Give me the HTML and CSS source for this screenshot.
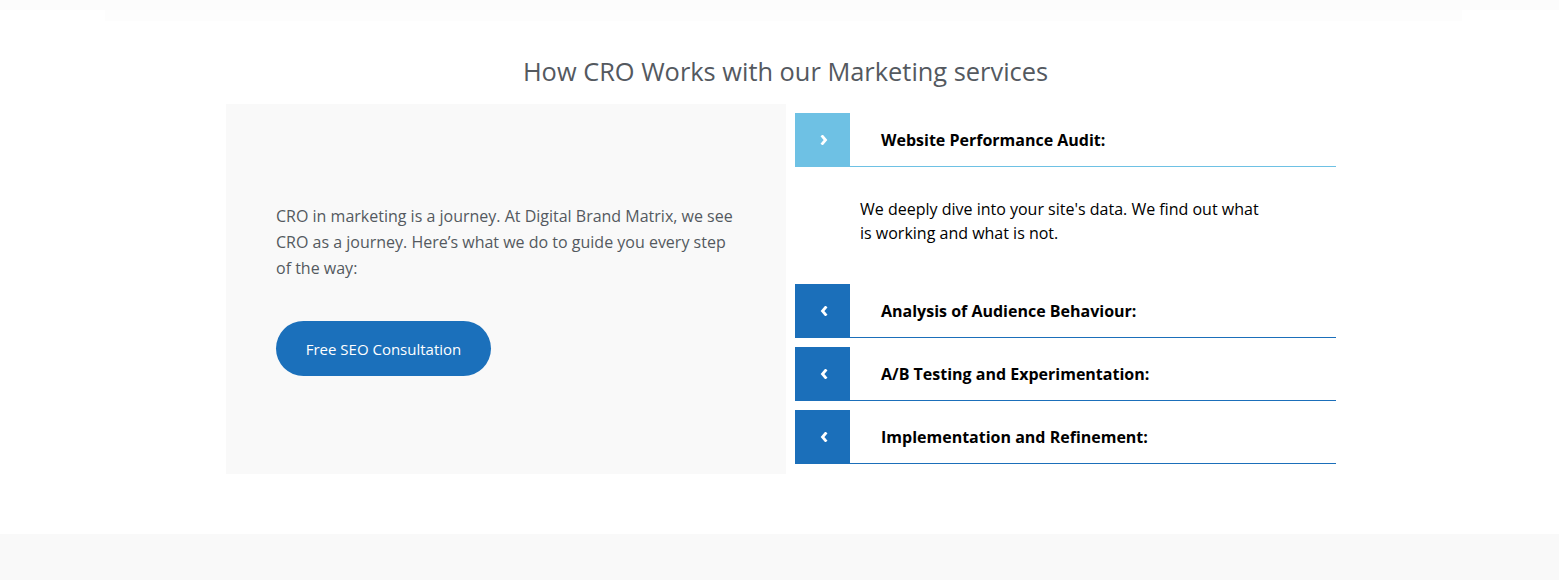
FILE: index.html
```html
<!DOCTYPE html>
<html lang="en">
<head>
<meta charset="utf-8">
<title>How CRO Works</title>
<link rel="stylesheet" href="styles.css">
</head>
<body>
<div class="topbar"></div>
<div class="topbar-inner"></div>
<section class="cro">
  <div class="container">
    <h2 class="heading">How CRO Works with our Marketing services</h2>
    <div class="cols">
      <div class="panel">
        <p class="intro">CRO in marketing is a journey. At Digital Brand Matrix, we see CRO as a journey. Here’s what we do to guide you every step of the way:</p>
        <a class="btn" href="#">Free SEO Consultation</a>
      </div>
      <div class="accordion">
        <div class="item active">
          <div class="item-head">
            <span class="icon"><svg width="8" height="10" viewBox="0 0 8 10"><polyline points="2.5,1.5 5.5,5 2.5,8.5" fill="none" stroke="#fff" stroke-width="2.8" stroke-linecap="square"/></svg></span>
            <span class="title">Website Performance Audit:</span>
          </div>
          <div class="item-body">We deeply dive into your site's data. We find out what is working and what is not.</div>
        </div>
        <div class="item">
          <div class="item-head">
            <span class="icon"><svg width="8" height="10" viewBox="0 0 8 10"><polyline points="5.5,1.5 2.5,5 5.5,8.5" fill="none" stroke="#fff" stroke-width="2.8" stroke-linecap="square"/></svg></span>
            <span class="title">Analysis of Audience Behaviour:</span>
          </div>
        </div>
        <div class="item">
          <div class="item-head">
            <span class="icon"><svg width="8" height="10" viewBox="0 0 8 10"><polyline points="5.5,1.5 2.5,5 5.5,8.5" fill="none" stroke="#fff" stroke-width="2.8" stroke-linecap="square"/></svg></span>
            <span class="title">A/B Testing and Experimentation:</span>
          </div>
        </div>
        <div class="item">
          <div class="item-head">
            <span class="icon"><svg width="8" height="10" viewBox="0 0 8 10"><polyline points="5.5,1.5 2.5,5 5.5,8.5" fill="none" stroke="#fff" stroke-width="2.8" stroke-linecap="square"/></svg></span>
            <span class="title">Implementation and Refinement:</span>
          </div>
        </div>
      </div>
    </div>
  </div>
</section>
<section class="next"></section>
</body>
</html>
```
FILE: styles.css
```css
* { box-sizing: border-box; }
html, body { margin: 0; padding: 0; background: #fff; overflow: hidden; }
body { font-family: "Open Sans", "Noto Sans", sans-serif; }

.topbar { height: 10px; background: #fcfcfc; }
.topbar-inner { width: 1357px; height: 11px; margin: 0 0 0 105px; background: #fdfdfd; }

.cro { padding: 35px 0 60px; }
.container { width: 1113px; padding-left: 3px; margin: 0 auto; }

.heading {
  margin: 0 0 17px;
  padding-left: 9px;
  text-align: center;
  font-size: 25.4px;
  line-height: 31px;
  font-weight: 400;
  color: #54595f;
}

.cols { display: flex; gap: 9px; align-items: flex-start; }

.panel {
  width: 560px;
  height: 370px;
  background: #f9f9f9;
  padding: 1px 50px 0;
  display: flex;
  flex-direction: column;
  justify-content: center;
  align-items: flex-start;
}
.intro {
  margin: 0 0 40px;
  font-size: 16px;
  line-height: 26px;
  color: #54595f;
}
.btn {
  display: inline-flex;
  align-items: center;
  justify-content: center;
  width: 215px;
  height: 55px;
  border-radius: 28px;
  background: #1b70bb;
  color: #fff;
  font-size: 15px;
  text-decoration: none;
}

.accordion { width: 541px; padding-top: 9px; }
.item { margin-bottom: 9px; }
.item-head {
  display: flex;
  align-items: center;
  height: 54px;
  border-bottom: 1px solid #1b6fba;
}
.icon {
  width: 55px;
  height: 53px;
  align-self: flex-start;
  background: #1b6fba;
  display: flex;
  align-items: center;
  justify-content: center;
}
.icon svg { display: block; margin-top: 1px; margin-left: 2px; }
.title {
  padding-left: 31px;
  font-size: 16px;
  font-weight: 700;
  color: #000;
}
.item.active .item-head { border-bottom-color: #6ec1e4; }
.item.active .icon { background: #6ec1e4; }
.item-body {
  padding: 30px 65px 30px 65px;
  font-size: 16px;
  line-height: 24px;
  color: #000;
}

.next { height: 60px; background: #f9f9f9; }
```
